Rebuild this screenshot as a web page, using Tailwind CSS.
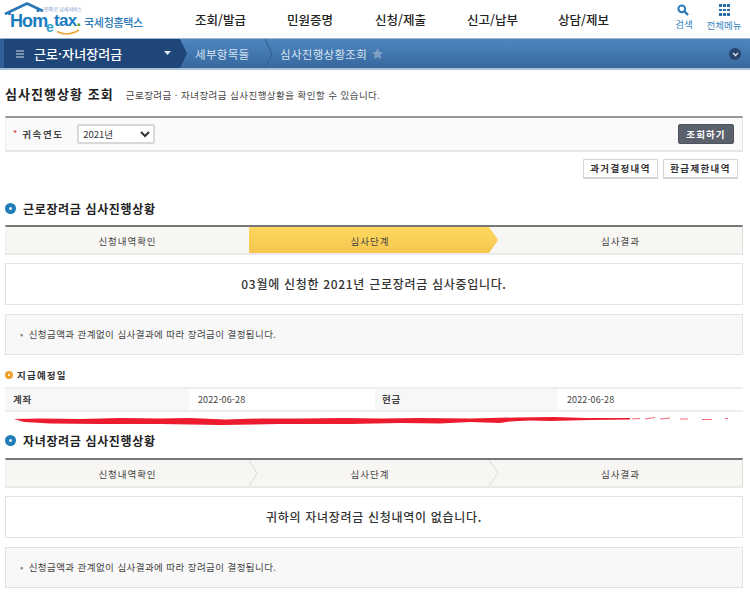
<!DOCTYPE html>
<html lang="ko">
<head>
<meta charset="utf-8">
<script src="https://cdn.jsdelivr.net/npm/@tailwindcss/browser@4"></script>
</head>
<body class="bg-white font-['Noto_Sans_CJK_KR','Noto_Sans',sans-serif] text-[#333] overflow-hidden">
<div class="w-[750px] h-[594px] overflow-hidden relative">
  <!-- header -->
  <header class="h-[38px] flex relative">
    <div class="w-[150px] relative shrink-0">
      <svg class="absolute left-0 top-0" width="84" height="38" viewBox="0 0 84 38" fill="none">
        <path d="M5 14 L27 3.5 L43 11" stroke="#2a78b4" stroke-width="2.6" fill="none"/>
        <path d="M9.5 12 V15 M38 9 V12" stroke="#2a78b4" stroke-width="2.6"/>
        <path d="M57 31.5 Q68 37 79 30" stroke="#f0a63a" stroke-width="1.5" fill="none"/>
      </svg>
      <span class="absolute left-[10px] top-[14px] font-['Liberation_Sans'] font-bold text-[18px] leading-[14px] tracking-[-0.9px] text-[#1a7cc0]">Hom</span>
      <span class="absolute left-[46px] top-[20px] font-['Liberation_Sans'] font-bold text-[14px] leading-[14px] text-[#2f9fd0]">e</span>
      <span class="absolute left-[54px] top-[14px] font-['Liberation_Sans'] font-bold text-[17px] leading-[14px] tracking-[-0.7px] text-[#1a7cc0]">tax<span class="text-[#5d9b2c]">.</span></span>
      <span class="absolute left-[44px] top-[6px] text-[5px] leading-[6px] text-[#6d97c4] whitespace-nowrap">민의로 납세서비스</span>
      <span class="absolute left-[84px] top-[14px] text-[11px] leading-[16px] font-medium text-[#2a7ab8] tracking-[-0.3px] whitespace-nowrap">국세청홈택스</span>
    </div>
    <nav class="flex text-[12.5px] font-medium text-[#222] leading-[16px] pt-[12px] pl-[45px] whitespace-nowrap">
      <span class="w-[92px]">조회/발급</span>
      <span class="w-[88px]">민원증명</span>
      <span class="w-[92px]">신청/제출</span>
      <span class="w-[91px]">신고/납부</span>
      <span>상담/제보</span>
    </nav>
    <div class="absolute left-[674px] top-[4px] w-[20px] flex flex-col items-center text-[#3a87bf] text-[9.5px] leading-[12px]">
      <svg class="-ml-[2px]" width="12" height="12" viewBox="0 0 12 12" fill="none"><circle cx="4.8" cy="4.8" r="3.4" stroke="#2a7ab8" stroke-width="2"/><path d="M7.5 7.5 L11 11" stroke="#2a7ab8" stroke-width="2.4"/></svg>
      <span class="mt-[2px] whitespace-nowrap">검색</span>
    </div>
    <div class="absolute left-[705px] top-[4px] w-[38px] flex flex-col items-center text-[#3a87bf] text-[9.5px] leading-[12px]">
      <div class="grid grid-cols-3 gap-[2px] w-[10px]">
        <i class="w-[2.5px] h-[2.5px] bg-[#2a6ea8]"></i><i class="w-[2.5px] h-[2.5px] bg-[#2a6ea8]"></i><i class="w-[2.5px] h-[2.5px] bg-[#2a6ea8]"></i>
        <i class="w-[2.5px] h-[2.5px] bg-[#2a6ea8]"></i><i class="w-[2.5px] h-[2.5px] bg-[#2a6ea8]"></i><i class="w-[2.5px] h-[2.5px] bg-[#2a6ea8]"></i>
        <i class="w-[2.5px] h-[2.5px] bg-[#2a6ea8]"></i><i class="w-[2.5px] h-[2.5px] bg-[#2a6ea8]"></i><i class="w-[2.5px] h-[2.5px] bg-[#2a6ea8]"></i>
      </div>
      <span class="mt-[3px] whitespace-nowrap">전체메뉴</span>
    </div>
  </header>
  <!-- blue bar -->
  <div class="h-[32px] relative border-t border-[#9db6cf] border-b-[2px] border-b-[#a9c2d9] bg-gradient-to-b from-[#4f86bf] to-[#37689f] flex items-center text-white">
    <svg class="absolute left-0 top-0" width="280" height="29" viewBox="0 0 280 29" fill="none">
      <path d="M0 0 H180 L187 14.5 L180 29 H0 Z" fill="#1f4679"/>
      <path d="M265 0 L272 14.5 L265 29" stroke="#2f5f95" stroke-width="1"/>
      <path d="M0 0 V29" stroke="#2f5f95" stroke-width="8"/>
    </svg>
    <div class="relative flex items-center h-full w-[180px]">
      <svg class="ml-[16px]" width="8" height="8" viewBox="0 0 8 8"><path d="M0 1 H8 M0 4 H8 M0 7 H8" stroke="#d5deea" stroke-width="1.2"/></svg>
      <span class="ml-[10px] text-[13px] font-medium leading-[16px] tracking-[0.1px] whitespace-nowrap">근로·자녀장려금</span>
      <svg class="absolute left-[164px] top-[12px]" width="7" height="5" viewBox="0 0 7 5"><path d="M0 0 H7 L3.5 4 Z" fill="#e6edf5"/></svg>
    </div>
    <span class="relative ml-[15px] text-[11.5px] leading-[14px] tracking-[0.3px] text-[#d7e4f1] whitespace-nowrap w-[85px]">세부항목들</span>
    <span class="relative text-[11.5px] leading-[14px] tracking-[0.3px] text-[#d7e4f1] whitespace-nowrap">심사진행상황조회</span>
    <svg class="relative ml-[5px]" width="11" height="11" viewBox="0 0 12 12"><path d="M6 0 L7.8 4 L12 4.5 L9 7.4 L9.8 12 L6 9.7 L2.2 12 L3 7.4 L0 4.5 L4.2 4 Z" fill="#7f9fc3"/></svg>
    <div class="absolute left-[729px] top-[9px] w-[12px] h-[12px] rounded-full bg-[#27456e] flex items-center justify-center">
      <svg width="7" height="5" viewBox="0 0 7 5" fill="none"><path d="M1 1 L3.5 3.5 L6 1" stroke="#dfe7f1" stroke-width="1.3"/></svg>
    </div>
  </div>
  <main class="px-[5px] w-[748px]">
    <!-- title -->
    <div class="flex items-baseline h-[46px] pt-[15px]">
      <h1 class="text-[13px] font-bold leading-[18px] text-[#222] tracking-[1.05px]">심사진행상황 조회</h1>
      <p class="ml-[12px] text-[9.5px] leading-[14px] text-[#444] tracking-[0.45px]">근로장려금 · 자녀장려금 심사진행상황을 확인할 수 있습니다.</p>
    </div>
    <!-- search -->
    <div class="h-[36px] border-t-[2px] border-t-[#999] border-b-[2px] border-b-[#e6e6e6] border-r border-r-[#e6e6e6] border-l border-l-[#eee] bg-[#fafafa] flex items-center">
      <span class="ml-[7px] text-[#d9282f] text-[9px] leading-[10px]">*</span>
      <span class="ml-[5px] text-[9.5px] font-bold text-[#444] w-[55px] tracking-[1.6px]">귀속연도</span>
      <select class="w-[78px] h-[20px] bg-white border-[2px] border-[#d8d8d8] rounded-[2px] text-[9.5px] text-[#333] font-['Noto_Sans_CJK_KR']"><option>2021년</option></select>
      <button class="ml-auto mr-[8px] w-[56px] h-[20px] rounded-[2px] bg-[#5b616c] text-white text-[9.5px] font-bold tracking-[1.1px] border border-[#4d525c]">조회하기</button>
    </div>
    <!-- buttons -->
    <div class="flex justify-end gap-[5px] pr-[5px] pt-[7px] h-[48px]">
      <button class="w-[75px] h-[20px] border-[1px] border-b-[2px] border-[#d5d5d5] bg-white text-[9.5px] font-bold text-[#333] rounded-[1px] tracking-[1.35px]">과거결정내역</button>
      <button class="w-[75px] h-[20px] border-[1px] border-b-[2px] border-[#d5d5d5] bg-white text-[9.5px] font-bold text-[#333] rounded-[1px] tracking-[1.35px]">환급제한내역</button>
    </div>
    <!-- section 1 -->
    <div class="flex items-center h-[17px] mb-[8px]">
      <span class="w-[11px] h-[11px] rounded-full bg-[#1f7ab8] flex items-center justify-center"><i class="w-[3px] h-[3px] bg-white/90 rounded-full"></i></span>
      <h2 class="ml-[7px] text-[12px] font-bold leading-[16px] text-[#222] tracking-[0.65px]">근로장려금 심사진행상황</h2>
    </div>
    <div class="relative h-[30px] pt-[2px] border-t-[2px] border-t-[#777] border-b-[2px] border-b-[#eaeaea] border-r border-r-[#ddd] border-l border-l-[#eee] bg-[#f7f6f3] grid grid-cols-[243px_242px_1fr] items-center text-center text-[9.5px] text-[#444] tracking-[0.95px]">
      <svg class="absolute left-[243px] top-0" width="250" height="26" viewBox="0 0 250 26"><defs><linearGradient id="y" x1="0" y1="0" x2="0" y2="1"><stop offset="0" stop-color="#fed75f"/><stop offset="1" stop-color="#f5c64f"/></linearGradient></defs><path d="M0 0 H240 L249 13 L240 26 H0 Z" fill="url(#y)"/></svg>
      <span class="relative">신청내역확인</span><span class="relative">심사단계</span><span class="relative pl-[8px]">심사결과</span>
    </div>
    <div class="mt-[8px] h-[42px] border-[1px] border-[#e2e2e2] flex items-center justify-center text-[12px] text-[#333] tracking-[0.7px] font-medium">03월에 신청한 2021년 근로장려금 심사중입니다.</div>
    <div class="mt-[9px] h-[41px] border-[1px] border-[#e2e2e2] bg-[#f8f8f8] flex items-center pl-[14px] text-[9.5px] text-[#444] tracking-[0.43px]">
      <span class="text-[#888] mr-[5px]">•</span>신청금액과 관계없이 심사결과에 따라 장려금이 결정됩니다.
    </div>
    <!-- pay date -->
    <div class="flex items-center h-[14px] mt-[13px] mb-[5px]">
      <span class="w-[8px] h-[8px] rounded-full bg-[#ef9f2f] flex items-center justify-center"><i class="w-[2px] h-[2px] bg-white rounded-full"></i></span>
      <h3 class="ml-[4px] text-[9.5px] font-bold text-[#333] tracking-[1.2px]">지급예정일</h3>
    </div>
    <div class="h-[25px] border-t-[2px] border-t-[#eee] border-b-[2px] border-b-[#eee] grid grid-cols-[184px_186px_183px_1fr] items-stretch text-[9px] text-[#444]">
      <div class="bg-[#f7f7f7] flex items-center pl-[8px] font-bold text-[9.5px] tracking-[0.8px]">계좌</div>
      <div class="flex items-center pl-[9px] tracking-[0.1px]">2022-06-28</div>
      <div class="bg-[#f7f7f7] flex items-center pl-[7px] font-bold text-[9.5px] tracking-[0.8px]">현금</div>
      <div class="flex items-center pl-[9px] tracking-[0.1px]">2022-06-28</div>
    </div>
    <!-- section 2 -->
    <div class="flex items-center h-[17px] mt-[20px] mb-[9px]">
      <span class="w-[11px] h-[11px] rounded-full bg-[#1f7ab8] flex items-center justify-center"><i class="w-[3px] h-[3px] bg-white/90 rounded-full"></i></span>
      <h2 class="ml-[7px] text-[12px] font-bold leading-[16px] text-[#222] tracking-[0.65px]">자녀장려금 심사진행상황</h2>
    </div>
    <div class="relative h-[30px] pt-[2px] border-t-[2px] border-t-[#777] border-b-[2px] border-b-[#eaeaea] border-r border-r-[#ddd] border-l border-l-[#eee] bg-[#f7f6f3] grid grid-cols-[243px_242px_1fr] items-center text-center text-[9.5px] text-[#444] tracking-[0.95px]">
      <svg class="absolute left-[243px] top-0" width="250" height="26" viewBox="0 0 250 26" fill="none"><path d="M0 0 L8 13 L0 26 M240 0 L249 13 L240 26" stroke="#dcdcdc"/></svg>
      <span class="relative">신청내역확인</span><span class="relative">심사단계</span><span class="relative pl-[8px]">심사결과</span>
    </div>
    <div class="mt-[8px] h-[42px] border-[1px] border-[#e2e2e2] flex items-center justify-center text-[12px] text-[#333] tracking-[0.7px] font-medium">귀하의 자녀장려금 신청내역이 없습니다.</div>
    <div class="mt-[9px] h-[41px] border-[1px] border-[#e2e2e2] bg-[#f8f8f8] flex items-center pl-[14px] text-[9.5px] text-[#444] tracking-[0.43px]">
      <span class="text-[#888] mr-[5px]">•</span>신청금액과 관계없이 심사결과에 따라 장려금이 결정됩니다.
    </div>
  </main>
  <!-- red marker scribble lying over the page -->
  <svg class="absolute left-0 top-[412px] pointer-events-none" width="750" height="16" viewBox="0 0 750 16" fill="none">
    <path d="M14 7 L40 6.5 L80 7 L120 6 L160 6.5 L190 6 L225 7.5 L260 6.5 L300 6.5 L345 6 L380 6.5 L420 6 L470 6.5 L515 5.5 L555 5 L585 6 L610 6 L630 6 L630 7.5 L590 8 L550 9 L530 8.5 L510 9.5 L500 11 L470 10 L440 11.5 L400 11 L350 12 L280 12 L220 13 L160 12 L100 12 L50 11.5 L24 10 Z" fill="#ec1c2e"/>
    <path d="M632 7 L640 6.5 M645 7 L655 5.5 M660 7 L670 6 M680 7 L688 7 M702 7.5 L712 7.5 M725 6.5 L728 6.5" stroke="#f06a78" stroke-width="1"/>
  </svg>
</div>
</body>
</html>
